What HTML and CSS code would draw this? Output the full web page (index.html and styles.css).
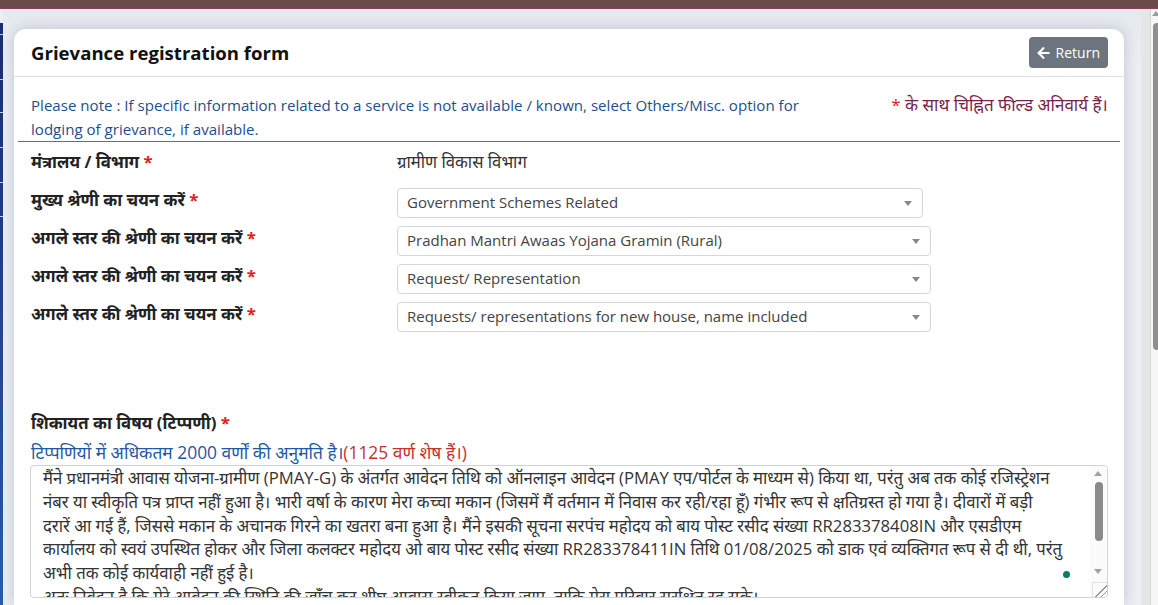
FILE: index.html
```html
<!DOCTYPE html>
<html lang="hi">
<head>
    <meta charset="UTF-8">
    <meta name="viewport" content="width=device-width, initial-scale=1.0">
    <title>Grievance registration form</title>
    <link rel="stylesheet" href="styles.css">
</head>
<body>
    <div class="topbar"></div>
    <div class="layout">
        <div class="sidebar">
            <span></span><span></span><span></span><span></span><span></span><span></span>
        </div>
        <div class="main">
            <div class="card">
                <div class="card-header">
                    <h2>Grievance registration form</h2>
                    <button type="button" class="btn-return">
                        <svg viewBox="0 0 448 512" width="13" height="14" aria-hidden="true"><path fill="#fff" d="M257.5 445.1l-22.2 22.2c-9.4 9.4-24.6 9.4-33.9 0L7 273c-9.4-9.4-9.4-24.6 0-33.9L201.4 44.7c9.4-9.4 24.6-9.4 33.9 0l22.2 22.2c9.5 9.5 9.3 25-.4 34.3L136.6 216H424c13.3 0 24 10.7 24 24v32c0 13.3-10.7 24-24 24H136.6l120.5 114.8c9.8 9.3 10 24.8.4 34.3z"/></svg>
                        Return
                    </button>
                </div>

                <div class="note-row">
                    <p class="note">Please note : If specific information related to a service is not available / known, select Others/Misc. option for<br>lodging of grievance, if available.</p>
                    <p class="mandatory"><span class="req">*</span> के साथ चिह्नित फील्ड अनिवार्य हैं।</p>
                </div>

                <form class="form-grid">
                    <label>मंत्रालय / विभाग <span class="req">*</span></label>
                    <div class="value">ग्रामीण विकास विभाग</div>

                    <label>मुख्य श्रेणी का चयन करें <span class="req">*</span></label>
                    <div class="select select-short">Government Schemes Related</div>

                    <label>अगले स्तर की श्रेणी का चयन करें <span class="req">*</span></label>
                    <div class="select">Pradhan Mantri Awaas Yojana Gramin (Rural)</div>

                    <label>अगले स्तर की श्रेणी का चयन करें <span class="req">*</span></label>
                    <div class="select">Request/ Representation</div>

                    <label>अगले स्तर की श्रेणी का चयन करें <span class="req">*</span></label>
                    <div class="select">Requests/ representations for new house, name included</div>
                </form>

                <div class="remarks">
                    <label class="remarks-label">शिकायत का विषय (टिप्पणी) <span class="req">*</span></label>
                    <p class="hint">टिप्पणियों में अधिकतम 2000 वर्णों की अनुमति है।<span class="left">(1125 वर्ण शेष हैं।)</span></p>
                    <div class="textarea">
                        <div class="textarea-text">
                            <span>मैंने प्रधानमंत्री आवास योजना-ग्रामीण (PMAY-G) के अंतर्गत आवेदन तिथि को ऑनलाइन आवेदन (PMAY एप/पोर्टल के माध्यम से) किया था, परंतु अब तक कोई रजिस्ट्रेशन</span>
                            <span>नंबर या स्वीकृति पत्र प्राप्त नहीं हुआ है। भारी वर्षा के कारण मेरा कच्चा मकान (जिसमें मैं वर्तमान में निवास कर रही/रहा हूँ) गंभीर रूप से क्षतिग्रस्त हो गया है। दीवारों में बड़ी</span>
                            <span>दरारें आ गई हैं, जिससे मकान के अचानक गिरने का खतरा बना हुआ है। मैंने इसकी सूचना सरपंच महोदय को बाय पोस्ट रसीद संख्या RR283378408IN और एसडीएम</span>
                            <span>कार्यालय को स्वयं उपस्थित होकर और जिला कलक्टर महोदय ओ बाय पोस्ट रसीद संख्या RR283378411IN तिथि 01/08/2025 को डाक एवं व्यक्तिगत रूप से दी थी, परंतु</span>
                            <span>अभी तक कोई कार्यवाही नहीं हुई है।</span>
                            <span>अतः निवेदन है कि मेरे आवेदन की स्थिति की जाँच कर शीघ्र आवास स्वीकृत किया जाए, ताकि मेरा परिवार सुरक्षित रह सके।</span>
                        </div>
                        <div class="ta-scroll">
                            <i class="arrow-up"></i>
                            <i class="thumb"></i>
                            <i class="arrow-down"></i>
                            <i class="grip"></i>
                        </div>
                        <i class="ext-dot"></i>
                    </div>
                </div>
            </div>
        </div>
        <div class="page-scroll">
            <i class="arrow-up"></i>
            <i class="thumb"></i>
        </div>
    </div>
</body>
</html>
```

FILE: styles.css
```css
/* Page frame */
body {
    margin: 0;
    height: 605px;
    overflow: hidden;
    font-family: "Open Sans", "Noto Sans", sans-serif;
    background: #eceef1;
    color: #333;
}

.topbar {
    height: 8px;
    background: #6b4b49;
    border-bottom: 1px solid #8e3d63;
}

.layout {
    display: flex;
    height: 596px;
}

.sidebar {
    width: 3px;
    margin-top: 14px;
    background: linear-gradient(#16306c, #2c5ca8);
    display: grid;
    grid-template-rows: 12px 45px 33px 35px 35px 34px;
    align-content: start;
}

.sidebar span {
    border-bottom: 1px solid rgba(255, 255, 255, 0.75);
}

.main {
    flex: 1;
    padding: 20px 17px 0 11px;
    background: linear-gradient(#e6e9ee, #eceef1 60px);
}

/* Card */
.card {
    background: #fff;
    border-radius: 12px 12px 0 0;
    box-shadow: 0 0 14px rgba(60, 90, 140, 0.28);
    height: 100%;
}

.card-header {
    display: flex;
    justify-content: space-between;
    align-items: center;
    height: 47px;
    padding: 0 16px 0 17px;
    border-bottom: 1px solid #dee2e6;
}

.card-header h2 {
    margin: 0;
    font-size: 18.6px;
    font-weight: 700;
    color: #111;
}

.btn-return {
    display: flex;
    align-items: center;
    gap: 6px;
    height: 31px;
    padding: 0 8px;
    border: none;
    border-radius: 4px;
    background: #6c757d;
    color: #fff;
    font-family: inherit;
    font-size: 14px;
}

.note-row {
    display: flex;
    justify-content: space-between;
    margin: 0 4px;
    padding: 16px 12px 0 13px;
    border-bottom: 1px solid #3d7bab;
}

.note {
    margin: 0;
    font-size: 15.1px;
    line-height: 24px;
    color: #1f4e8c;
}

.mandatory {
    margin: 0;
    font-size: 17px;
    line-height: 24px;
    color: #7a1f4c;
}

.req {
    color: #e02020;
}

/* Form rows */
.form-grid {
    display: grid;
    grid-template-columns: 366px 1fr;
    grid-auto-rows: 38px;
    padding: 1px 0 0 17px;
    margin: 0;
}

.form-grid label {
    font-size: 16.8px;
    font-weight: 700;
    line-height: 38px;
    color: #222;
}

.value {
    font-size: 16.7px;
    line-height: 38px;
    color: #333;
}

.select {
    position: relative;
    box-sizing: border-box;
    width: 534px;
    height: 30px;
    margin-top: 7px;
    padding-left: 9px;
    border: 1px solid #d3d6da;
    border-radius: 4px;
    font-size: 15px;
    line-height: 27px;
    color: #444;
}

.select-short {
    width: 526px;
}

.select::after {
    content: "";
    position: absolute;
    right: 10px;
    top: 12px;
    border-left: 4px solid transparent;
    border-right: 4px solid transparent;
    border-top: 5px solid #888;
}

/* Remarks */
.remarks {
    padding: 78px 16px 0 16px;
}

.remarks-label {
    display: block;
    padding-left: 1px;
    font-size: 16.8px;
    font-weight: 700;
    line-height: 24px;
    color: #222;
}

.hint {
    margin: 5px 0 1px 1px;
    font-size: 17.4px;
    line-height: 24px;
    color: #1f57a5;
}

.hint .left {
    color: #c8302f;
}

.textarea {
    position: relative;
    height: 131px;
    border: 1px solid #ced4da;
    border-radius: 4px;
    overflow: hidden;
}

.textarea-text {
    padding: 0 0 0 12px;
    font-size: 16.7px;
    line-height: 23.75px;
    color: #333;
}

.textarea-text span {
    display: block;
    white-space: nowrap;
}

.ta-scroll {
    position: absolute;
    top: 0;
    right: 0;
    bottom: 0;
    width: 17px;
    background: #fbfbfb;
}

.arrow-up, .arrow-down {
    position: absolute;
    left: 4px;
    border-left: 4.5px solid transparent;
    border-right: 4.5px solid transparent;
}

.arrow-up {
    top: 5px;
    border-bottom: 5px solid #a3a3a3;
}

.arrow-down {
    top: 103px;
    border-top: 5px solid #a3a3a3;
}

.thumb {
    position: absolute;
    left: 5px;
    top: 16px;
    width: 8px;
    height: 59px;
    border-radius: 4px;
    background: #8a8a8a;
}

.grip {
    position: absolute;
    right: 0;
    bottom: 0;
    width: 14px;
    height: 14px;
    border-top: 1px solid #e2e2e2;
    border-left: 1px solid #e2e2e2;
    background: linear-gradient(135deg, transparent 55%, #999 55%, #999 62%, transparent 62%, transparent 75%, #999 75%, #999 82%, transparent 82%);
}

.ext-dot {
    position: absolute;
    left: 1032px;
    top: 105px;
    width: 7px;
    height: 7px;
    border-radius: 50%;
    background: #0f7a68;
}

/* Browser scrollbar at the right edge */
.page-scroll {
    position: relative;
    width: 17px;
    background: linear-gradient(to right, #e5e6e8 0 9px, #d7d7d7 9px 10px, #f6f6f6 10px);
}

.page-scroll .arrow-up {
    left: 11px;
    top: 2px;
    border-bottom-color: #9a9a9a;
}

.page-scroll .thumb {
    left: 12px;
    top: 14px;
    width: 8px;
    height: 327px;
    background: #8f8f8f;
}
```
